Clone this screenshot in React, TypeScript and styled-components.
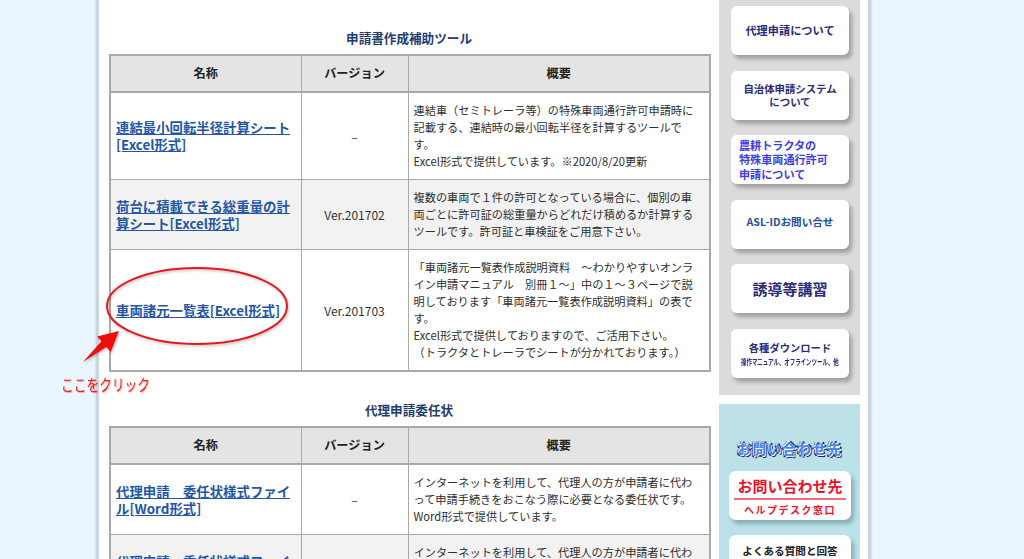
import styled, { createGlobalStyle } from "styled-components";

type FileRow = {
  name: string[];
  version: string;
  desc: string[];
};

const toolRows: FileRow[] = [
  {
    name: ["連結最小回転半径計算シート", "[Excel形式]"],
    version: "–",
    desc: [
      "連結車（セミトレーラ等）の特殊車両通行許可申請時に",
      "記載する、連結時の最小回転半径を計算するツールで",
      "す。",
      "Excel形式で提供しています。※2020/8/20更新",
    ],
  },
  {
    name: ["荷台に積載できる総重量の計", "算シート[Excel形式]"],
    version: "Ver.201702",
    desc: [
      "複数の車両で１件の許可となっている場合に、個別の車",
      "両ごとに許可証の総重量からどれだけ積めるか計算する",
      "ツールです。許可証と車検証をご用意下さい。",
    ],
  },
  {
    name: ["車両諸元一覧表[Excel形式]"],
    version: "Ver.201703",
    desc: [
      "「車両諸元一覧表作成説明資料　～わかりやすいオンラ",
      "イン申請マニュアル　別冊１～」中の１～３ページで説",
      "明しております「車両諸元一覧表作成説明資料」の表で",
      "す。",
      "Excel形式で提供しておりますので、ご活用下さい。",
      "（トラクタとトレーラでシートが分かれております。）",
    ],
  },
];

const proxyRows: FileRow[] = [
  {
    name: ["代理申請　委任状様式ファイ", "ル[Word形式]"],
    version: "–",
    desc: [
      "インターネットを利用して、代理人の方が申請者に代わ",
      "って申請手続きをおこなう際に必要となる委任状です。",
      "Word形式で提供しています。",
    ],
  },
  {
    name: ["代理申請　委任状様式ファイ", "ル[PDF形式]"],
    version: "–",
    desc: [
      "インターネットを利用して、代理人の方が申請者に代わ",
      "って申請手続きをおこなう際に必要となる委任状です。",
      "PDF形式で提供しています。",
    ],
  },
];

function FileTable({ rows }: { rows: FileRow[] }) {
  return (
    <Table>
      <colgroup>
        <col style={{ width: 191 }} />
        <col style={{ width: 107 }} />
        <col style={{ width: 302 }} />
      </colgroup>
      <thead>
        <tr>
          <HeadCell>名称</HeadCell>
          <HeadCell>バージョン</HeadCell>
          <HeadCell>概要</HeadCell>
        </tr>
      </thead>
      <tbody>
        {rows.map((row, i) => (
          <Row key={i} $shade={i % 2 === 1}>
            <NameCell>
              <FileLink href="#">
                {row.name.map((line, j) => (
                  <span key={j}>
                    {j > 0 && <br />}
                    {line}
                  </span>
                ))}
              </FileLink>
            </NameCell>
            <VersionCell>{row.version}</VersionCell>
            <DescCell>
              {row.desc.map((line, j) => (
                <span key={j}>
                  {j > 0 && <br />}
                  {line}
                </span>
              ))}
            </DescCell>
          </Row>
        ))}
      </tbody>
    </Table>
  );
}

export default function App() {
  return (
    <>
      <GlobalStyle />
      <Viewport>
        <Page>
          <Main>
            <SectionTitle>申請書作成補助ツール</SectionTitle>
            <FileTable rows={toolRows} />
            <SectionTitle $gap>代理申請委任状</SectionTitle>
            <FileTable rows={proxyRows} />
          </Main>

          <Sidebar>
            <MenuBlock>
              <MenuButton>代理申請について</MenuButton>
              <MenuButton $size={10.4}>
                自治体申請システム
                <br />
                について
              </MenuButton>
              <MenuButton $align="left" $color="#3d3de0" $size={11.1}>
                農耕トラクタの
                <br />
                特殊車両通行許可
                <br />
                申請について
              </MenuButton>
              <MenuButton $color="#1f4f9e" $size={10.6} $lift>
                ASL-IDお問い合せ
              </MenuButton>
              <MenuButton $size={15}>誘導等講習</MenuButton>
              <MenuButton $size={10.3}>
                各種ダウンロード
                <SubCaption>操作マニュアル、オフラインツール、他</SubCaption>
              </MenuButton>
            </MenuBlock>

            <ContactPanel>
              <ContactHeading>お問い合わせ先</ContactHeading>
              <ContactCard>
                <ContactMain>お問い合わせ先</ContactMain>
                <ContactRule />
                <ContactSub>ヘルプデスク窓口</ContactSub>
              </ContactCard>
              <FaqCard>よくある質問と回答</FaqCard>
            </ContactPanel>
          </Sidebar>
        </Page>

        <Annotation width="1024" height="559" viewBox="0 0 1024 559">
          <defs>
            <filter id="soft" x="-20%" y="-20%" width="140%" height="140%">
              <feDropShadow dx="1" dy="1.5" stdDeviation="1.2" floodColor="#000" floodOpacity="0.25" />
            </filter>
          </defs>
          <ellipse cx="197" cy="306" rx="90" ry="38" fill="none" stroke="#e8141c" strokeWidth="2" filter="url(#soft)" />
          <path
            d="M119 331 L110.8 352 L106.4 347 L83 362 L101.4 341.2 L97 336.6 Z"
            fill="#f01010"
            filter="url(#soft)"
          />
        </Annotation>
        <ClickNote>ここをクリック</ClickNote>
      </Viewport>
    </>
  );
}

const GlobalStyle = createGlobalStyle`
  html, body {
    margin: 0;
    padding: 0;
  }

  body {
    background: #eaf6fd;
    font-family: "Noto Sans CJK JP", "Noto Sans", sans-serif;
    color: #333;
  }
`;

const Viewport = styled.div`
  position: relative;
  height: 559px;
  overflow: hidden;
  display: flex;
  padding-left: 96px;
`;

const Page = styled.div`
  display: flex;
  align-items: stretch;
  background: #fff;
  border-left: 3px solid #c9d6df;
  border-right: 3px solid #c9d6df;
  padding-right: 8px;
  box-shadow: 0 0 2px rgba(80, 110, 130, 0.35);
`;

const Main = styled.div`
  width: 620px;
  box-sizing: border-box;
  padding: 29px 10px 0;
`;

const SectionTitle = styled.h2<{ $gap?: boolean }>`
  margin: ${(p) => (p.$gap ? "29px" : "0")} 0 8px;
  text-align: center;
  font-size: 12.6px;
  line-height: 17px;
  font-weight: bold;
  color: #1f3d6e;
`;

const Table = styled.table`
  width: 600px;
  table-layout: fixed;
  border-collapse: collapse;
  border: 2px solid #a9a9a9;
`;

const HeadCell = styled.th`
  background: #e4e4e4;
  border: 1px solid #a9a9a9;
  border-bottom-width: 2px;
  padding: 9px 6px;
  line-height: 17px;
  font-size: 12.2px;
  font-weight: bold;
  color: #222;
`;

const Row = styled.tr<{ $shade?: boolean }>`
  background: ${(p) => (p.$shade ? "#f2f2f2" : "#fff")};
`;

const BodyCell = styled.td`
  border: 1px solid #a9a9a9;
  padding: 9px 6px;
  line-height: 17px;
  vertical-align: middle;
  white-space: nowrap;
  overflow: hidden;
`;

const NameCell = styled(BodyCell)`
  font-size: 13.4px;
  padding-left: 5px;
`;

const VersionCell = styled(BodyCell)`
  text-align: center;
  font-size: 12px;
  color: #333;
`;

const DescCell = styled(BodyCell)`
  font-size: 11.2px;
  color: #2e2e2e;
  padding-left: 5px;
`;

const FileLink = styled.a`
  color: #2356a6;
  font-weight: bold;
  text-decoration: underline;
`;

const Sidebar = styled.div`
  width: 141px;
  display: flex;
  flex-direction: column;
`;

const MenuBlock = styled.div`
  background: #dcdcdc;
  padding: 6px 11px 17px 12px;
  display: flex;
  flex-direction: column;
  gap: 15.6px;
`;

const MenuButton = styled.div<{
  $align?: "left" | "center";
  $color?: string;
  $size?: number;
  $lift?: boolean;
}>`
  height: 49px;
  box-sizing: border-box;
  background: #fff;
  border-radius: 6px;
  box-shadow: 3px 4px 4px rgba(0, 0, 0, 0.28);
  display: flex;
  flex-direction: column;
  justify-content: center;
  align-items: ${(p) => (p.$align === "left" ? "flex-start" : "center")};
  text-align: ${(p) => p.$align ?? "center"};
  padding: ${(p) => (p.$align === "left" ? "0 6px 0 8px" : p.$lift ? "0 4px 6px" : "0 4px")};
  font-weight: bold;
  font-size: ${(p) => p.$size ?? 11.2}px;
  line-height: ${(p) => (p.$align === "left" ? 14.5 : 13.5)}px;
  color: ${(p) => p.$color ?? "#2b2b78"};
  white-space: nowrap;
`;

const SubCaption = styled.span`
  display: block;
  margin-top: 3px;
  font-size: 8px;
  line-height: 9px;
  transform: scaleX(0.68);
  color: #2b2b78;
`;

const ContactPanel = styled.div`
  margin-top: 9px;
  flex: 1;
  background: #bce1e8;
  padding: 34px 9px 0 10px;
`;

const ContactHeading = styled.div`
  text-align: center;
  font-size: 13.5px;
  line-height: 20px;
  letter-spacing: 1.5px;
  font-weight: 900;
  color: #4f86ea;
  text-shadow:
    0.8px 0.8px 0 #fff,
    -0.8px -0.8px 0 #fff,
    1.6px 1.6px 0 #1b2a5c,
    -1.2px -1.2px 0 #1b2a5c,
    1.2px -1.2px 0 #1b2a5c,
    -1.2px 1.2px 0 #1b2a5c;
  margin-bottom: 13px;
`;

const ContactCard = styled.div`
  height: 49px;
  box-sizing: border-box;
  background: #fff;
  border-radius: 7px;
  box-shadow: 3px 4px 4px rgba(40, 80, 90, 0.35);
  padding: 5px 5px 0;
  text-align: center;
`;

const ContactMain = styled.div`
  font-size: 15px;
  line-height: 20px;
  font-weight: bold;
  color: #e8132b;
`;

const ContactRule = styled.div`
  height: 2px;
  background: #f26b7b;
  margin: 2px 0 3px;
`;

const ContactSub = styled.div`
  font-size: 10px;
  line-height: 14px;
  letter-spacing: 1.5px;
  font-weight: bold;
  color: #e8132b;
`;

const FaqCard = styled.div`
  margin-top: 15px;
  height: 49px;
  box-sizing: border-box;
  background: #fff;
  border-radius: 7px;
  box-shadow: 3px 4px 4px rgba(40, 80, 90, 0.35);
  padding-top: 7px;
  text-align: center;
  font-size: 10.6px;
  line-height: 18px;
  font-weight: bold;
  color: #222;
`;

const Annotation = styled.svg`
  position: absolute;
  left: 0;
  top: 0;
  pointer-events: none;
`;

const ClickNote = styled.div`
  position: absolute;
  left: 61px;
  top: 374px;
  font-size: 15.5px;
  line-height: 20px;
  transform: scaleX(0.82);
  transform-origin: left center;
  color: #ff1a1a;
  text-shadow: 1px 1px 1px rgba(200, 0, 0, 0.3);
  white-space: nowrap;
`;
